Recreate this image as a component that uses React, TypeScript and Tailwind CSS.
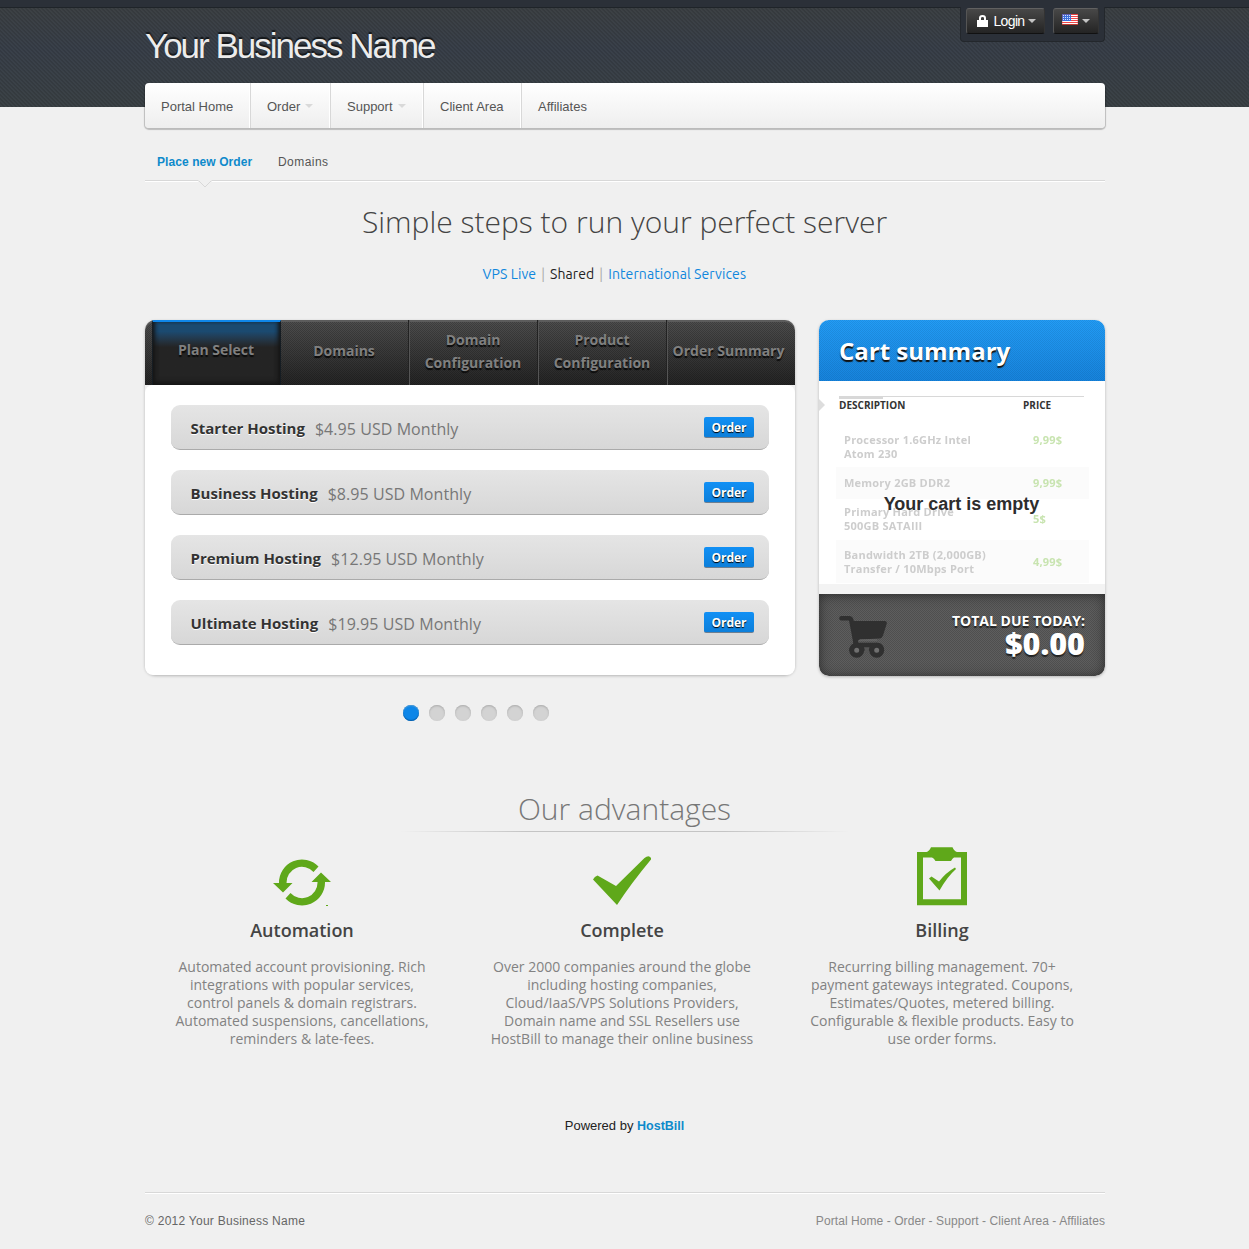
import type { ReactNode } from "react";

const sans = "font-['Liberation_Sans',Arial,sans-serif]";
const open = "font-['Open_Sans',sans-serif]";

function Caret({ className }: { className: string }) {
  return (
    <svg width="8" height="4" viewBox="0 0 8 4" className={className}>
      <path d="M0 0h8L4 4z" fill="currentColor" />
    </svg>
  );
}

function Flag() {
  return (
    <svg width="16" height="11" viewBox="0 0 16 11">
      <rect width="16" height="11" fill="#fff" />
      {[0, 2, 4, 6, 8, 10].map((y) => (
        <rect key={y} y={y} width="16" height="1" fill={y === 10 ? "#b83a2e" : "#f0474a"} />
      ))}
      <rect width="9" height="7" fill="#3c6fdc" />
      {[1, 3, 5].map((y) =>
        [1, 3, 5, 7].map((x) => <rect key={`${x}-${y}`} x={x} y={y} width="1" height="1" fill="#cfe0ff" />),
      )}
      <rect x="0.5" y="0.5" width="15" height="10" fill="none" stroke="#c33" strokeOpacity="0.25" />
    </svg>
  );
}

function TopBar() {
  return (
    <header className="h-[107px] bg-[repeating-linear-gradient(45deg,rgba(0,0,0,0.11)_0px,rgba(0,0,0,0.11)_1.414px,transparent_1.414px,transparent_2.828px),linear-gradient(#3d4143,#39404a_45%,#3b4246)]">
      <div className="h-2 border-b border-[#1f2429] bg-[#2b3038]" />
      <div className="ml-[145px] flex h-[75px] w-[960px] justify-between">
        <h1 className="mt-[18px] whitespace-nowrap text-[35px] leading-10 tracking-[-2px] text-[#ececec] [text-shadow:0_-2px_1px_#14171a]">
          Your Business Name
        </h1>
        <div className="-mt-px flex h-[35px] w-[145px] gap-2 rounded-b border border-t-0 border-[#23272c] bg-[#2b3038] pl-[5px]">
          <button className="mt-px flex h-[26px] w-[79px] items-center rounded-[3px] border border-t-[#616161] border-r-[#333] border-b-[#111] border-l-[#555] bg-linear-to-b from-[#484848] to-[#242424] pl-[10px] text-[14px] tracking-[-0.65px] text-white">
            <svg width="11" height="12" viewBox="0 0 11 12">
              <path d="M0 5h2V3q0-3 3.500-3T9 3v2h2v7H0zM4 5h3V3.200Q7 2 5.500 2T4 3.200z" fill="#fff" />
            </svg>
            <span className="ml-[5px] w-[32px]">Login</span>
            <Caret className="ml-[3px] text-[#c4c4c4]" />
          </button>
          <button className="mt-px flex h-[26px] w-[46px] items-center rounded-[3px] border border-t-[#616161] border-r-[#333] border-b-[#111] border-l-[#555] bg-linear-to-b from-[#484848] to-[#242424] pl-[8px]">
            <span className="-mt-[3px]">
              <Flag />
            </span>
            <Caret className="ml-1 text-[#c4c4c4]" />
          </button>
        </div>
      </div>
      <nav className="relative ml-[145px] flex h-[45px] w-[960px] rounded bg-linear-to-b from-white to-[#eeeeee] text-[13px] leading-[48px] text-[#555] shadow-[0_1px_1px_1px_rgba(0,0,0,0.22)]">
        <NavItem width="w-[106px]">Portal Home</NavItem>
        <NavItem width="w-[80px]" caret>
          Order
        </NavItem>
        <NavItem width="w-[93px]" caret>
          Support
        </NavItem>
        <NavItem width="w-[98px]">Client Area</NavItem>
        <span className="h-[45px] pl-4">Affiliates</span>
      </nav>
    </header>
  );
}

function NavItem({ children, width, caret }: { children: ReactNode; width: string; caret?: boolean }) {
  return (
    <span
      className={`flex h-[45px] shrink-0 whitespace-nowrap border-r border-[#d8d8d8] pl-4 shadow-[inset_-1px_0_0_#fff] ${width}`}
    >
      {children}
      {caret && <Caret className="ml-[5px] mt-[21px] text-[#d9d9d9]" />}
    </span>
  );
}

function SubNav() {
  return (
    <div className="ml-[145px] mt-[21px] flex h-[60px] w-[960px] flex-col">
      <div className="flex h-[53px] shrink-0 gap-[25px] border-b border-[#d8d8d8] pl-3 pt-[24px] text-[12px] leading-5 shadow-[0_1px_0_#fff]">
        <b className="w-[96px] whitespace-nowrap tracking-[0.08px] text-[#0e8acb]">Place new Order</b>
        <span className="tracking-[0.45px] text-[#555]">Domains</span>
      </div>
      <svg width="14" height="8" viewBox="0 0 14 8" className="relative -mt-px ml-[53px] shrink-0">
        <path d="M0 0h14v2L7 7.500 0 2z" fill="#f0f0f0" />
        <path d="M.5.5 7 7 13.500.5" fill="none" stroke="#d8d8d8" />
      </svg>
    </div>
  );
}

const steps = [
  { label: ["Domains"], box: "w-[128px] pr-[2px] pb-[5px]" },
  { label: ["Domain", "Configuration"], box: "w-[129px] pr-[2px] pb-[3px]" },
  { label: ["Product", "Configuration"], box: "w-[129px] pr-[2px] pb-[3px]" },
  { label: ["Order Summary"], box: "w-[128px] pr-[6px] pb-[5px]" },
];

const plans = [
  { name: "Starter Hosting", price: "$4.95 USD Monthly" },
  { name: "Business Hosting", price: "$8.95 USD Monthly" },
  { name: "Premium Hosting", price: "$12.95 USD Monthly" },
  { name: "Ultimate Hosting", price: "$19.95 USD Monthly" },
];

function PlanPanel() {
  return (
    <section className={`h-[355px] w-[650px] rounded-[10px] bg-[#f0f0f0] shadow-[0_1px_3px_rgba(0,0,0,0.25)] ${open}`}>
      <div className="flex h-[65px] overflow-hidden rounded-t-[10px] bg-[conic-gradient(rgba(0,0,0,0.2)_25%,transparent_0_50%,rgba(0,0,0,0.2)_0_75%,transparent_0),linear-gradient(#4f4f4f,#242424)] bg-size-[2px_2px,100%_100%] text-center text-[14px] font-bold leading-[23px] text-[#808080] shadow-[inset_0_2px_0_#5c5c5c] [text-shadow:0_2px_1px_#0a0a0a]">
        <div className="ml-[7px] h-[65px] w-[129px] shrink-0 border-x border-t-2 border-x-[#151c22] border-t-[#0f87ea] bg-linear-to-b from-[#1b4a70] from-15% to-[#242424] to-40% pr-px pt-[16px] shadow-[inset_0_-3px_5px_#151515,inset_4px_0_5px_-3px_#151515,inset_-4px_0_5px_-3px_#151515]">
          Plan Select
        </div>
        {steps.map((step, i) => (
          <div
            key={i}
            className={`flex shrink-0 flex-col justify-center whitespace-nowrap ${i > 0 ? "border-l border-[#555] shadow-[-1px_0_0_#222]" : ""} ${step.box}`}
          >
            {step.label.map((line) => (
              <span key={line}>{line}</span>
            ))}
          </div>
        ))}
      </div>
      <div className="flex h-[290px] flex-col gap-5 rounded-[8px] bg-white pl-[26px] pt-5">
        {plans.map((plan) => (
          <div
            key={plan.name}
            className="flex h-[45px] w-[598px] items-center rounded-[9px] border-b border-[#aaa] bg-linear-to-b from-[#e5e5e5] to-[#d7d7d7] pl-[19.5px] pr-[15px] leading-6"
          >
            <b className="mt-[2px] text-[15px] text-[#333] [text-shadow:0_1px_0_#fff]">{plan.name}</b>
            <span className="ml-[10px] mt-[4px] text-[16px] tracking-[0.06px] text-[#777]">{plan.price}</span>
            <button className="ml-auto h-[21px] w-[50px] rounded-[2px] border-b border-[#6d7f91] bg-linear-to-b from-[#1190f5] to-[#0c7fda] pt-px text-[12px] font-bold leading-5 text-white [text-shadow:0_1px_1px_#000]">
              Order
            </button>
          </div>
        ))}
      </div>
    </section>
  );
}

const cartRows = [
  { lines: ["Processor 1.6GHz Intel", "Atom 230"], price: "9,99$", box: "items-start pt-[6px] h-[40px]" },
  { lines: ["Memory 2GB DDR2"], price: "9,99$", box: "items-center h-[32px] bg-[#fbfbfb]" },
  { lines: ["Primary Hard Drive", "500GB SATAIII"], price: "5$", box: "items-center h-[41px] pb-[2px]" },
  { lines: ["Bandwidth 2TB (2,000GB)", "Transfer / 10Mbps Port"], price: "4,99$", box: "items-center h-[43px] bg-[#fbfbfb]" },
];

function CartPanel() {
  return (
    <aside className={`h-[356px] w-[286px] overflow-hidden rounded-[10px] bg-white shadow-[0_1px_3px_rgba(0,0,0,0.25)] ${open}`}>
      <h2 className="h-[61px] bg-[conic-gradient(rgba(0,0,0,0.08)_25%,transparent_0_50%,rgba(0,0,0,0.08)_0_75%,transparent_0),linear-gradient(#229cf6,#1683dd)] bg-size-[2px_2px,100%_100%] pl-5 text-[24px] font-bold leading-[61px] text-white [text-shadow:0_2px_1px_#111]">
        Cart summary
      </h2>
      <div className="relative h-[203px] pl-[17px] pt-[15px]">
        <svg width="6" height="12" viewBox="0 0 6 12" className="absolute left-0 top-[18px]">
          <path d="M0 0 6 6 0 12z" fill="#ddd" />
        </svg>
        <div className="ml-[3px] flex h-[31px] w-[245px] border-t border-[#d8d8d8] text-[10px] font-bold leading-3 text-[#333]">
          <span className="w-[184px]">
            <i className="block h-[2px] w-[44px] bg-[#d8d8d8]" />
            DESCRIPTION
          </span>
          <span className="pt-[2px]">PRICE</span>
        </div>
        {cartRows.map((row) => (
          <div key={row.lines[0]} className={`flex w-[253px] pl-2 text-[11px] font-bold leading-[14px] ${row.box}`}>
            <div className="w-[189px] tracking-[0.22px] text-[#cdcdcd] blur-[0.7px]">
              {row.lines.map((line) => (
                <div key={line}>{line}</div>
              ))}
            </div>
            <span className="tracking-[0.2px] text-[#c8e4b0] blur-[0.7px]">{row.price}</span>
          </div>
        ))}
        <div className={`absolute left-0 top-[111px] w-[285px] text-center text-[18px] font-bold leading-6 text-[#2d2d2d] ${sans}`}>
          Your cart is empty
        </div>
      </div>
      <div className="h-[10px] bg-[#f3f3f3]" />
      <div className="flex h-[82px] justify-between rounded-b-[9px] bg-[#5e5e5e] bg-[conic-gradient(rgba(0,0,0,0.16)_25%,transparent_0_50%,rgba(0,0,0,0.16)_0_75%,transparent_0)] bg-size-[2px_2px] px-5 pt-[18px] text-right text-white shadow-[inset_0_1px_12px_#2b2b2b]">
        <svg width="50" height="44" viewBox="0 0 50 44" className="mt-[3px]">
          <path d="M2.500 3.300H10q1.900 0 2.300 2L16.500 27" fill="none" stroke="#303030" strokeWidth="4.600" strokeLinecap="round" />
          <path d="M12 6h33.500q2.800 0 2.300 2.500L44 20.500q-1 2.800-3.500 3L20.500 24.500 19 27.700H38q7 .3 7.300 8H10.200q0-5 4.300-7.200z" fill="#303030" />
          <path d="M19.500 26.500q.3-1.500 2-1.500H38" fill="none" stroke="#6c6c6c" strokeWidth="1.200" />
          <circle cx="17.700" cy="35.300" r="5" fill="#707070" stroke="#303030" strokeWidth="5" />
          <circle cx="37.700" cy="35.300" r="5" fill="#707070" stroke="#303030" strokeWidth="5" />
          <path d="M25 32.300h5.500q-1.500 3 0 5.500H25q1.500-2.500 0-5.500z" fill="#565656" />
        </svg>
        <div className="font-bold">
          <p className="text-[14px] leading-[18px] [text-shadow:0_2px_1px_#222]">TOTAL DUE TODAY:</p>
          <p className="text-[30.500px] font-extrabold leading-[27px] [text-shadow:0_2px_1px_#222]">$0.00</p>
        </div>
      </div>
    </aside>
  );
}

const advantages = [
  {
    title: "Automation",
    lines: [
      "Automated account provisioning. Rich",
      "integrations with popular services,",
      "control panels & domain registrars.",
      "Automated suspensions, cancellations,",
      "reminders & late-fees.",
    ],
    icon: (
      <svg width="58" height="62" viewBox="0 0 58 62" fill="#5fa81a">
        <path d="M45.500 19.500 40.500 25A15.500 15.500 0 0 0 13.500 36H19.500L10 45.500 0 36H6A23 23 0 0 1 45.500 19.500z" />
        <path d="M12.500 51.500 17.500 46A15.500 15.500 0 0 0 44.500 35H38.500L48 25.500 58 35H52A23 23 0 0 1 12.500 51.500z" />
        <rect x="53" y="58" width="2" height="1" />
      </svg>
    ),
  },
  {
    title: "Complete",
    lines: [
      "Over 2000 companies around the globe",
      "including hosting companies,",
      "Cloud/IaaS/VPS Solutions Providers,",
      "Domain name and SSL Resellers use",
      "HostBill to manage their online business",
    ],
    icon: (
      <svg width="58" height="62" viewBox="0 0 58 62" fill="#5fa81a">
        <path d="M4.500 28.500q-3 1-4.500 4L24 58Q38 36.500 58 12.500q.5-2.500-2.500-3.300-2 0-4 1.800L23 39z" />
      </svg>
    ),
  },
  {
    title: "Billing",
    lines: [
      "Recurring billing management. 70+",
      "payment gateways integrated. Coupons,",
      "Estimates/Quotes, metered billing.",
      "Configurable & flexible products. Easy to",
      "use order forms.",
    ],
    icon: (
      <svg width="50" height="62" viewBox="0 0 50 62" fill="#5fa81a">
        <path d="M0 5h9.500q2.500-.5 4.500-4.800h21.500q2 4.300 4.500 4.800H50v53.300H0zM6 10.500V52.300h38V10.500h-7q-1.500.5-3 3.500H18.500q-1.500-3-3.500-3.500z" fillRule="evenodd" />
        <path d="M12 31.500 14.500 29.500 22 34.500q7-9 16-14l1 1.500Q30 30 22.500 43.500z" />
      </svg>
    ),
  },
];

function Advantages() {
  return (
    <section className={`ml-[144px] w-[961px] ${open}`}>
      <h2 className="h-[42px] text-center text-[30px] font-light leading-[40px] text-[#777]">Our advantages</h2>
      <div className="mx-auto h-px w-[450px] bg-[linear-gradient(to_right,transparent,#c4c4c4_28%,#c4c4c4_72%,transparent)]" />
      <div className="ml-px flex pt-[15px] text-center">
        {advantages.map((item) => (
          <article key={item.title} className="flex w-[320px] flex-col items-center pr-[6px]">
            {item.icon}
            <h3 className="mt-[8px] text-[18px] font-semibold leading-[26px] text-[#444]">{item.title}</h3>
            <div className="mt-[15px] whitespace-nowrap text-[14px] leading-[18px] text-[#828282]">
              {item.lines.map((line) => (
                <p key={line}>{line}</p>
              ))}
            </div>
          </article>
        ))}
      </div>
    </section>
  );
}

export default function App() {
  return (
    <div className={`h-[1249px] w-[1249px] overflow-hidden bg-[#f0f0f0] ${sans}`}>
      <TopBar />
      <SubNav />
      <h2 className={`mt-[12px] h-[46px] text-center text-[30px] font-light leading-[44px] text-[#444] ${open}`}>
        Simple steps to run your perfect server
      </h2>
      <div className="ml-[482.500px] mt-[16px] flex h-[58px] gap-[5px] whitespace-nowrap font-['Ubuntu','Noto_Sans',sans-serif] text-[14px] leading-6 tracking-[0.1px] text-[#0f87dd]">
        <span>VPS Live</span>
        <span className="text-[#aaa]">|</span>
        <span className="text-[#222]">Shared</span>
        <span className="text-[#aaa]">|</span>
        <span>International Services</span>
      </div>
      <div className="ml-[145px] flex gap-6">
        <PlanPanel />
        <CartPanel />
      </div>
      <div className="ml-[403px] mt-[29px] flex h-[84px] gap-[10px]">
        {[0, 1, 2, 3, 4, 5].map((i) => (
          <i
            key={i}
            className={`size-4 rounded-full ${i === 0 ? "bg-[#0d86e8] shadow-[inset_0_-1px_1px_#075ca8,inset_0_1px_1px_#4d9bd5]" : "bg-[#d3d3d3] shadow-[inset_0_1px_2px_#aaa]"}`}
          />
        ))}
      </div>
      <Advantages />
      <p className="mt-[68px] text-center text-[13px] leading-5 text-[#222]">
        Powered by <b className="text-[12.500px] text-[#0e8acb]">HostBill</b>
      </p>
      <footer className="ml-[145px] mt-[56px] flex w-[960px] justify-between border-t border-[#d8d8d8] pt-[18px] text-[12px] leading-5 shadow-[inset_0_1px_0_#fff]">
        <span className="tracking-[0.26px] text-[#666]">© 2012 Your Business Name</span>
        <span className="tracking-[0.07px] text-[#888]">Portal Home - Order - Support - Client Area - Affiliates</span>
      </footer>
    </div>
  );
}
